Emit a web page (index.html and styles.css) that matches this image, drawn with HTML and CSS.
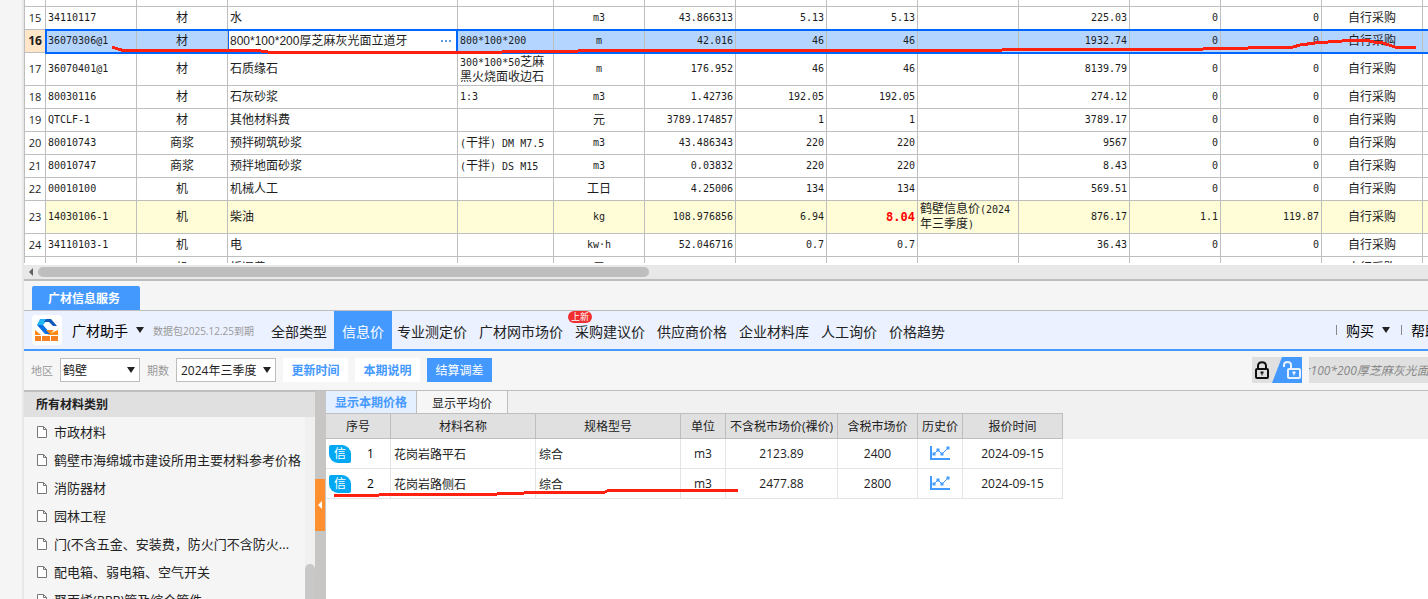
FILE: index.html
```html
<!DOCTYPE html>
<html lang="zh-CN">
<head>
<meta charset="utf-8">
<title>广材信息服务</title>
<link rel="stylesheet" href="styles.css">
</head>
<body>
<div class="app">
<aside class="gutter"></aside>
<main class="workspace">

<section class="grid-pane">
<table class="grid">
<colgroup><col class="w-no"><col class="w-m"><col class="w-m"><col class="w-name"><col class="w-spec"><col class="w-m"><col class="w-m"><col class="w-m"><col class="w-m"><col class="w-l"><col class="w-xl"><col class="w-m"><col class="w-l"><col class="w-l"><col class="w-m"></colgroup>
<tbody>
<tr class="sliver"><th></th><td></td><td></td><td></td><td></td><td></td><td></td><td></td><td></td><td></td><td></td><td></td><td></td><td></td><td></td></tr>
<tr><th>15</th><td>34110117</td><td class="c cn">材</td><td class="cn">水</td><td></td><td class="c">m3</td><td class="r">43.866313</td><td class="r">5.13</td><td class="r">5.13</td><td></td><td class="r">225.03</td><td class="r">0</td><td class="r">0</td><td class="c cn">自行采购</td><td></td></tr>
<tr class="selected"><th>16</th><td>36070306@1</td><td class="c cn">材</td><td class="editing"><div class="editor"><input type="text" aria-label="名称" value="800*100*200厚芝麻灰光面立道牙"><button type="button" aria-label="更多"><svg width="12" height="4" viewBox="0 0 12 4"><path d="M1 1h2v2H1zM5 1h2v2H5zM9 1h2v2H9z" fill="#5a9fdf"/></svg></button></div></td><td>800*100*200</td><td class="c">m</td><td class="r">42.016</td><td class="r">46</td><td class="r">46</td><td></td><td class="r">1932.74</td><td class="r">0</td><td class="r">0</td><td class="c cn">自行采购</td><td></td></tr>
<tr class="tall"><th>17</th><td>36070401@1</td><td class="c cn">材</td><td class="cn">石质缘石</td><td class="cn"><span class="en">300*100*50</span>芝麻<br>黑火烧面收边石</td><td class="c">m</td><td class="r">176.952</td><td class="r">46</td><td class="r">46</td><td></td><td class="r">8139.79</td><td class="r">0</td><td class="r">0</td><td class="c cn">自行采购</td><td></td></tr>
<tr><th>18</th><td>80030116</td><td class="c cn">材</td><td class="cn">石灰砂浆</td><td>1:3</td><td class="c">m3</td><td class="r">1.42736</td><td class="r">192.05</td><td class="r">192.05</td><td></td><td class="r">274.12</td><td class="r">0</td><td class="r">0</td><td class="c cn">自行采购</td><td></td></tr>
<tr><th>19</th><td>QTCLF-1</td><td class="c cn">材</td><td class="cn">其他材料费</td><td></td><td class="c cn">元</td><td class="r">3789.174857</td><td class="r">1</td><td class="r">1</td><td></td><td class="r">3789.17</td><td class="r">0</td><td class="r">0</td><td class="c cn">自行采购</td><td></td></tr>
<tr><th>20</th><td>80010743</td><td class="c cn">商浆</td><td class="cn">预拌砌筑砂浆</td><td class="cn"><span class="en">(</span>干拌<span class="en">) DM M7.5</span></td><td class="c">m3</td><td class="r">43.486343</td><td class="r">220</td><td class="r">220</td><td></td><td class="r">9567</td><td class="r">0</td><td class="r">0</td><td class="c cn">自行采购</td><td></td></tr>
<tr><th>21</th><td>80010747</td><td class="c cn">商浆</td><td class="cn">预拌地面砂浆</td><td class="cn"><span class="en">(</span>干拌<span class="en">) DS M15</span></td><td class="c">m3</td><td class="r">0.03832</td><td class="r">220</td><td class="r">220</td><td></td><td class="r">8.43</td><td class="r">0</td><td class="r">0</td><td class="c cn">自行采购</td><td></td></tr>
<tr><th>22</th><td>00010100</td><td class="c cn">机</td><td class="cn">机械人工</td><td></td><td class="c cn">工日</td><td class="r">4.25006</td><td class="r">134</td><td class="r">134</td><td></td><td class="r">569.51</td><td class="r">0</td><td class="r">0</td><td class="c cn">自行采购</td><td></td></tr>
<tr class="tall adjusted"><th>23</th><td>14030106-1</td><td class="c cn">机</td><td class="cn">柴油</td><td></td><td class="c">kg</td><td class="r">108.976856</td><td class="r">6.94</td><td class="r changed">8.04</td><td class="cn">鹤壁信息价<span class="en">(2024</span><br>年三季度<span class="en">)</span></td><td class="r">876.17</td><td class="r">1.1</td><td class="r">119.87</td><td class="c cn">自行采购</td><td></td></tr>
<tr><th>24</th><td>34110103-1</td><td class="c cn">机</td><td class="cn">电</td><td></td><td class="c">kw·h</td><td class="r">52.046716</td><td class="r">0.7</td><td class="r">0.7</td><td></td><td class="r">36.43</td><td class="r">0</td><td class="r">0</td><td class="c cn">自行采购</td><td></td></tr>
<tr><th></th><td></td><td class="c cn">机</td><td class="cn">折旧费</td><td></td><td class="c cn">元</td><td></td><td></td><td></td><td></td><td></td><td></td><td></td><td class="c cn">自行采购</td><td></td></tr>
</tbody>
</table>
<svg class="mark mark-grid" width="1404" height="60" viewBox="24 0 1404 60" fill="none" stroke="#ff2010" stroke-width="3" stroke-linejoin="round" aria-hidden="true"><path d="M112 47L118 49L123 50.500L258 50.500L268 52L502 52L504 51L578 51L580 50L1002 50L1004 49L1203 49L1206 48L1248 48L1250 47L1293 47L1300 45L1315 43L1328 42L1342 41L1368 40.500L1374 42L1383 43L1395 47L1416 47"/></svg>
</section>

<div class="hscroll"><svg width="14" height="14" viewBox="0 0 14 14" aria-hidden="true"><path d="M9 3v8L5 7z" fill="#606068"/></svg><div class="thumb"></div></div>

<section class="service">
<div class="dock"><button type="button" class="dock-tab">广材信息服务</button></div>

<nav class="nav">
<svg class="logo" width="30" height="30" viewBox="0 0 30 30" aria-hidden="true"><rect width="30" height="30" rx="4" fill="#fff"/><path d="M8 4h8l-5 6-6 0z" fill="#22b4f5"/><path d="M5 10h6l8 9h-6z" fill="#0a6fe0"/><path d="M14 4h5l6 7h-4l-4-4h-5z" fill="#1158b8"/><path d="M3 15l6 5H3zM26 15v5H15zM14 15h8l-4 4z" fill="#ff8a14"/><path d="M3 21h6v5H3zM10 21h8v5h-8zM19 21h7v5h-7z" fill="#f58220"/></svg>
<button type="button" class="brand">广材助手<svg width="8" height="6" viewBox="0 0 8 6"><path d="M0 0h8L4 6z" fill="#222"/></svg></button>
<span class="expiry">数据包2025.12.25到期</span>
<a href="#" class="first">全部类型</a>
<a href="#" class="active">信息价</a>
<div class="links">
<a href="#">专业测定价</a><a href="#">广材网市场价</a><a href="#" class="has-badge">采购建议价<span class="badge">上新</span></a><a href="#">供应商价格</a><a href="#">企业材料库</a><a href="#">人工询价</a><a href="#">价格趋势</a>
</div>
<div class="account"><button type="button">购买<svg width="8" height="6" viewBox="0 0 8 6"><path d="M0 0h8L4 6z" fill="#222"/></svg></button><button type="button">帮助</button></div>
</nav>

<div class="filters">
<label for="area">地区</label>
<span class="pick area"><select id="area"><option>鹤壁</option></select><svg width="8" height="6" viewBox="0 0 8 6"><path d="M0 0h8L4 6z" fill="#222"/></svg></span>
<label for="term">期数</label>
<span class="pick term"><select id="term"><option>2024年三季度</option></select><svg width="8" height="6" viewBox="0 0 8 6"><path d="M0 0h8L4 6z" fill="#222"/></svg></span>
<button type="button" class="btn">更新时间</button>
<button type="button" class="btn">本期说明</button>
<button type="button" class="btn primary">结算调差</button>
<div class="finder">
<button type="button" class="lock" aria-label="锁定"><svg width="50" height="26" viewBox="0 0 50 26" fill="none"><rect width="50" height="26" fill="#e0e0e0"/><path d="M30 0h20v26H20z" fill="#4499ff"/><rect x="4" y="12" width="12" height="9" rx="1" stroke="#111" stroke-width="2"/><path d="M6 12V9c0-5 8-5 8 0v3" stroke="#111" stroke-width="2"/><path d="M8.500 14.500h3v2h-1v2h-1v-2h-1z" fill="#111"/><rect x="36" y="12" width="12" height="9" rx="1" stroke="#e8f3ff" stroke-width="2"/><path d="M32 10V8c0-4 7-4 7 0v4" stroke="#e8f3ff" stroke-width="2"/><path d="M40.500 14.500h3v2h-1v2h-1v-2h-1z" fill="#fff"/></svg></button>
<input type="text" class="search" aria-label="搜索" value="*100*200厚芝麻灰光面立道牙">
</div>
</div>

<div class="content">
<aside class="tree">
<h2>所有材料类别</h2>
<div class="tree-body">
<ul>
<li><svg width="10" height="12" viewBox="0 0 10 12"><path d="M.5.500h6l3 3v8h-9zM6.500.500v3h3" fill="#fff" stroke="#777"/></svg><a href="#">市政材料</a></li>
<li><svg width="10" height="12" viewBox="0 0 10 12"><path d="M.5.500h6l3 3v8h-9zM6.500.500v3h3" fill="#fff" stroke="#777"/></svg><a href="#">鹤壁市海绵城市建设所用主要材料参考价格</a></li>
<li><svg width="10" height="12" viewBox="0 0 10 12"><path d="M.5.500h6l3 3v8h-9zM6.500.500v3h3" fill="#fff" stroke="#777"/></svg><a href="#">消防器材</a></li>
<li><svg width="10" height="12" viewBox="0 0 10 12"><path d="M.5.500h6l3 3v8h-9zM6.500.500v3h3" fill="#fff" stroke="#777"/></svg><a href="#">园林工程</a></li>
<li><svg width="10" height="12" viewBox="0 0 10 12"><path d="M.5.500h6l3 3v8h-9zM6.500.500v3h3" fill="#fff" stroke="#777"/></svg><a href="#">门(不含五金、安装费，防火门不含防火...</a></li>
<li><svg width="10" height="12" viewBox="0 0 10 12"><path d="M.5.500h6l3 3v8h-9zM6.500.500v3h3" fill="#fff" stroke="#777"/></svg><a href="#">配电箱、弱电箱、空气开关</a></li>
<li><svg width="10" height="12" viewBox="0 0 10 12"><path d="M.5.500h6l3 3v8h-9zM6.500.500v3h3" fill="#fff" stroke="#777"/></svg><a href="#">聚丙烯(PPR)管及综合管件</a></li>
</ul>
<div class="vscroll"><div class="vthumb"></div></div>
</div>
</aside>
<div class="splitter"><button type="button" aria-label="收起"><svg width="10" height="12" viewBox="0 0 10 12"><path d="M7 2v8L3 6z" fill="#fff"/></svg></button></div>

<section class="prices">
<div class="tabs"><button type="button" class="on">显示本期价格</button><button type="button">显示平均价</button></div>
<div class="table-wrap">
<table class="list">
<colgroup><col class="p-no"><col class="p-name"><col class="p-name"><col class="p-s"><col class="p-net"><col class="p-gross"><col class="p-s"><col class="p-date"></colgroup>
<thead><tr><th>序号</th><th>材料名称</th><th>规格型号</th><th>单位</th><th>不含税市场价(裸价)</th><th>含税市场价</th><th>历史价</th><th>报价时间</th></tr></thead>
<tbody>
<tr><td><span class="tag">信</span><span class="idx">1</span></td><td class="left">花岗岩路平石</td><td class="left">综合</td><td>m3</td><td>2123.89</td><td>2400</td><td><a href="#" aria-label="历史价"><svg width="20" height="15" viewBox="0 0 20 15" fill="none" stroke="#4499ff"><path d="M1 0v13h19" stroke-width="2"/><path d="M4 8l4-4 4 4 6-6" stroke-width="1"/><path d="M3.500 7.500h1v1h-1zM7.500 3.500h1v1h-1zM11.500 7.500h1v1h-1zM17.500 1.500h1v1h-1z" fill="#4499ff" stroke-width="2"/></svg></a></td><td>2024-09-15</td></tr>
<tr><td><span class="tag">信</span><span class="idx">2</span></td><td class="left">花岗岩路侧石</td><td class="left">综合</td><td>m3</td><td>2477.88</td><td>2800</td><td><a href="#" aria-label="历史价"><svg width="20" height="15" viewBox="0 0 20 15" fill="none" stroke="#4499ff"><path d="M1 0v13h19" stroke-width="2"/><path d="M4 8l4-4 4 4 6-6" stroke-width="1"/><path d="M3.500 7.500h1v1h-1zM7.500 3.500h1v1h-1zM11.500 7.500h1v1h-1zM17.500 1.500h1v1h-1z" fill="#4499ff" stroke-width="2"/></svg></a></td><td>2024-09-15</td></tr>
</tbody>
</table>
<svg class="mark mark-list" width="420" height="16" viewBox="326 484 420 16" fill="none" stroke="#ff2010" stroke-width="3" aria-hidden="true"><path d="M334 495.500L378 495.500L380 494.500L496 494.500L498 493.500L523 493.500L525 492.500L604 492.500L608 490.500L738 490.500"/></svg>
</div>
</section>
</div>
</section>
</main>
</div>
</body>
</html>
```
FILE: styles.css
```css
* { box-sizing: border-box; }
body {
  margin: 0;
  font-family: "Open Sans", "Noto Sans CJK SC", sans-serif;
  font-size: 12px;
  color: #222;
  background: #f5f5f5;
}
button, input, select { font: inherit; color: inherit; border: 0; padding: 0; margin: 0; background: none; border-radius: 0; outline: 0; }
a { color: inherit; text-decoration: none; }
svg { display: block; flex: none; }
.app { display: flex; height: 100vh; overflow: hidden; }
.gutter { flex: none; width: 24px; border-right: 2px solid #e8e8e8; }
.workspace { flex: 1; min-width: 0; display: flex; flex-direction: column; background: #fff; }

/* Material grid */
.grid-pane { flex: 263 1 0; min-height: 0; overflow: hidden; position: relative; border-left: 1px solid #bebebe; }
.grid { table-layout: fixed; width: 1508px; border-collapse: separate; border-spacing: 0; font-family: "DejaVu Sans Mono", "Noto Sans CJK SC", monospace; font-size: 10px; line-height: 14px; color: #1c1c1c; }
.grid td, .grid th { height: 23px; padding: 0 2px; border-right: 1px solid #bebebe; border-bottom: 1px solid #bebebe; white-space: nowrap; overflow: hidden; text-align: left; vertical-align: middle; }
.grid th { padding: 0; text-align: center; font: 11px/14px "Open Sans", sans-serif; background: #fff; }
.grid .sliver td, .grid .sliver th { height: 7px; }
.grid .tall td, .grid .tall th { height: 33px; }
.grid td.c { text-align: center; }
.grid td.r { text-align: right; }
.grid td.cn { font-family: "Noto Sans CJK SC", sans-serif; font-size: 12px; padding-bottom: 2px; }
.en { font-family: "DejaVu Sans Mono", monospace; font-size: 10px; line-height: 12px; }
.w-no { width: 21px; }
.w-m { width: 91px; }
.w-l { width: 101px; }
.w-xl { width: 111px; }
.w-spec { width: 96px; }
.w-name { width: 230px; }
.adjusted td { background: #fffcd8; }
.grid .changed { color: #f00; font-weight: bold; font-size: 12px; }
.selected { position: relative; }
.selected td { background: #b4d5ff; }
.grid .selected th { background: #ffe6c8; font-weight: bold; font-size: 12px; }
.selected::after { content: ""; position: absolute; inset: -1px 0 -1px 20px; border: 2px solid #0066ff; pointer-events: none; }
.grid td.editing { padding: 0; background: #fff; border-right: 2px solid #0066ff; box-shadow: inset 1px 0 #0066ff; }
.editor { display: flex; align-items: center; padding: 0 4px 0 2px; }
.editor input { flex: 1; min-width: 0; height: 18px; font: 12px/18px "Liberation Sans", "Noto Sans CJK SC", sans-serif; }
.mark { position: absolute; pointer-events: none; shape-rendering: crispEdges; }
.mark-grid { left: -1px; top: 0; }

.hscroll { flex: none; display: flex; align-items: center; height: 18px; border-top: 2px solid #fff; border-bottom: 2px solid #bebebe; background: #e8e8e8; }
.thumb { min-width: 40px; flex: 0 1 611px; height: 10px; border-radius: 5px; background: #bebebe; }

/* Price service */
.service { flex: 318 1 0; min-height: 0; display: flex; flex-direction: column; background: #f5f5f5; }
.dock { flex: none; padding: 5px 8px 0; border-bottom: 1px solid #bebebe; }
.dock-tab { display: block; height: 24px; padding: 0 20px 0 16px; color: #fff; font-weight: bold; background: #4499ff; border-radius: 2px 2px 0 0; }

.nav { flex: none; display: flex; align-items: center; height: 40px; background: #ebf1ff; border-bottom: 2px solid #4499ff; font-size: 14px; white-space: nowrap; overflow: hidden; }
.nav > * { flex: none; }
.logo { margin-left: 8px; }
.brand, .account button { display: flex; align-items: center; gap: 8px; color: #000; }
.brand { margin-left: 10px; }
.expiry { margin-left: 9px; color: #999; font-size: 10px; }
.nav .first { margin: 1px 7px 0 17px; }
.nav .active { align-self: stretch; display: flex; align-items: center; padding: 1px 8px 0; color: #fff; background: #4499ff; }
.links { display: flex; gap: 12px; padding: 1px 0 0 5px; align-self: stretch; align-items: center; }
.has-badge { position: relative; }
.badge { position: absolute; left: -7px; top: -10px; width: 24px; height: 12px; border-radius: 6px; background: #f03030; color: #fff; font-size: 9px; line-height: 12px; text-align: center; }
.account { display: flex; margin: 0 -11px 0 auto; }
.account button { position: relative; padding: 0 0 0 10px; }
.account button + button { margin-left: 11px; }
.account button::before { content: ""; position: absolute; left: 0; top: 5px; height: 10px; border-left: 1px solid #888; }

.filters { flex: none; display: flex; align-items: center; height: 40px; padding: 0 0 1px 7px; background: #f6f6f6; border-bottom: 1px solid #bebebe; white-space: nowrap; overflow: hidden; }
.filters label { color: #999; font-size: 11px; }
.pick { position: relative; height: 24px; margin: 0 7px; }
.pick select { width: 100%; height: 24px; padding: 0 2px; border: 1px solid #bebebe; background: #fff; appearance: none; }
.pick svg { position: absolute; right: 5px; top: 9px; pointer-events: none; }
.area { width: 80px; }
.term { width: 100px; }
.term select { padding-left: 4px; }
.btn { height: 24px; width: 65px; margin-right: 7px; background: #fff; color: #4499ff; font-weight: bold; }
.primary { background: #4499ff; color: #fff; font-weight: normal; }
.finder { display: flex; gap: 7px; margin-left: auto; }
.search { width: 119px; height: 26px; background: #e0e0e0; color: #888; font-style: italic; text-indent: -5px; }

.content { flex: 1; min-height: 0; display: flex; }
.tree { flex: none; width: 291px; display: flex; flex-direction: column; overflow: hidden; }
.tree h2 { flex: none; margin: 0; height: 26px; padding-left: 12px; border-top: 1px solid #bebebe; background: #e0e0e0; font-size: 12px; line-height: 25px; }
.tree-body { flex: 1; min-height: 0; display: flex; }
.tree ul { flex: 1; margin: 0; padding: 1px 0 0 13px; list-style: none; font-size: 13px; white-space: nowrap; }
.tree li { display: flex; align-items: center; gap: 7px; height: 28px; }
.tree a { padding-bottom: 2px; }
.vscroll { width: 10px; display: flex; flex-direction: column; justify-content: flex-end; background: #f0f0f0; }
.vthumb { height: 19%; background: #c8c8c8; border-radius: 5px 5px 0 0; }
.splitter { flex: none; width: 11px; display: flex; align-items: center; background: #c8c6c5; }
.splitter button { width: 10px; height: 52px; margin-top: 20px; background: #ff9030; }

.prices { flex: 1; min-width: 0; background: #fff; }
.tabs { display: flex; height: 22px; background: #f1f1f1; }
.tabs button { width: 91px; border-right: 1px solid #bebebe; background: #f6f6f6; padding-top: 2px; }
.tabs .on { color: #4499ff; font-weight: bold; background: #e4efff; padding-top: 0; }
.table-wrap { position: relative; background: linear-gradient(#f1f1f1 26px, #fff 26px); }
.list { table-layout: fixed; width: 737px; border-collapse: separate; border-spacing: 0; }
.list th { height: 26px; padding: 0; border: solid #bebebe; border-width: 1px 1px 1px 0; background: #e0e0e0; font-weight: normal; white-space: nowrap; }
.list td { height: 30px; padding: 0; border: solid #e4e4e4; border-width: 0 1px 1px 0; text-align: center; white-space: nowrap; }
.list td.left { text-align: left; padding-left: 3px; }
.list a { display: flex; justify-content: center; }
.tag { float: left; width: 22px; height: 18px; margin-left: 3px; border-radius: 2px 9px 2px 9px; background: #00a8f3; color: #fff; line-height: 18px; }
.idx { display: block; margin-left: 25px; line-height: 18px; color: #000; }
.p-no { width: 65px; }
.p-name { width: 145px; }
.p-s { width: 45px; }
.p-net { width: 112px; }
.p-gross { width: 80px; }
.p-date { width: 100px; }
.mark-list { left: 0; top: 71px; }
```
